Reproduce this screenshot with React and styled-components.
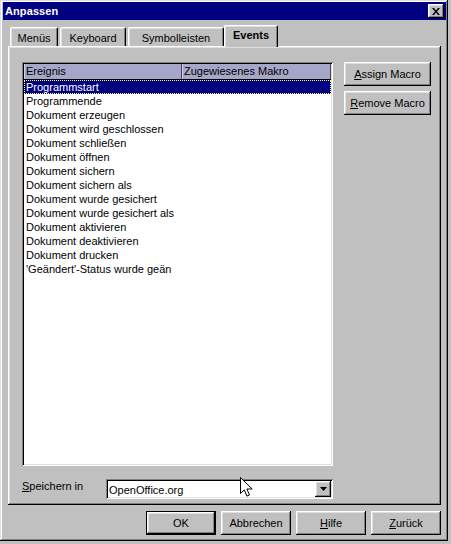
import React from "react";
import styled, { createGlobalStyle } from "styled-components";

const GlobalStyle = createGlobalStyle`
  html, body {
    margin: 0;
    padding: 0;
    background: #c0c0c0;
  }
  body {
    font-family: "Liberation Sans", Arial, sans-serif;
    font-size: 11px;
    color: #000;
  }
  * {
    box-sizing: border-box;
  }
`;

const events = [
  "Programmstart",
  "Programmende",
  "Dokument erzeugen",
  "Dokument wird geschlossen",
  "Dokument schließen",
  "Dokument öffnen",
  "Dokument sichern",
  "Dokument sichern als",
  "Dokument wurde gesichert",
  "Dokument wurde gesichert als",
  "Dokument aktivieren",
  "Dokument deaktivieren",
  "Dokument drucken",
  "'Geändert'-Status wurde geän",
];

const tabs = [
  { label: "Menüs", width: 48 },
  { label: "Keyboard", width: 66 },
  { label: "Symbolleisten", width: 96 },
  { label: "Events", width: 54, active: true },
];

export default function App() {
  return (
    <>
      <GlobalStyle />
      <Window>
        <TitleBar>
          <Title>Anpassen</Title>
          <CloseButton>
            <svg width="8" height="7" viewBox="0 0 8 7">
              <path d="M0 0h2l2 2.5L6 0h2L5 3.5 8 7H6L4 4.5 2 7H0l3-3.5z" fill="#000" />
            </svg>
          </CloseButton>
        </TitleBar>
        <Body>
          <TabRow>
            {tabs.map((t) => (
              <Tab key={t.label} $width={t.width} $active={t.active}>
                {t.label}
              </Tab>
            ))}
          </TabRow>
          <Panel>
            <TopArea>
              <List>
                <ListHeader>
                  <HeaderCell $width={158}>Ereignis</HeaderCell>
                  <HeaderCell $grow>Zugewiesenes Makro</HeaderCell>
                </ListHeader>
                <Rows>
                  {events.map((e, i) => (
                    <Row key={e} $selected={i === 0}>
                      {e}
                    </Row>
                  ))}
                </Rows>
              </List>
              <SideButtons>
                <Button $width={87}>
                  <u>A</u>ssign Macro
                </Button>
                <Button $width={87}>
                  <u>R</u>emove Macro
                </Button>
              </SideButtons>
            </TopArea>
            <SaveRow>
              <SaveLabel>
                <u>S</u>peichern in
              </SaveLabel>
              <Combo>
                <ComboText>OpenOffice.org</ComboText>
                <ComboArrow>
                  <svg width="7" height="4" viewBox="0 0 7 4">
                    <path d="M0 0h7L3.5 4z" fill="#000" />
                  </svg>
                </ComboArrow>
              </Combo>
            </SaveRow>
          </Panel>
          <Footer>
            <Button $width={70} $default>
              OK
            </Button>
            <Button $width={70}>Abbrechen</Button>
            <Button $width={70}>
              <u>H</u>ilfe
            </Button>
            <Button $width={70}>
              <u>Z</u>urück
            </Button>
          </Footer>
        </Body>
        <Cursor width="13" height="21" viewBox="0 0 13 21">
          <path
            d="M0.5 0.5v16l3.8-3.6 2.6 6.2 2.6-1.1-2.6-6h5.3z"
            fill="#fff"
            stroke="#000"
            strokeWidth="1"
          />
        </Cursor>
      </Window>
    </>
  );
}

const raised = `
  box-shadow: inset -1px -1px #000, inset 1px 1px #fff,
    inset -2px -2px #808080, inset 2px 2px #dfdfdf;
`;

const sunken = `
  box-shadow: inset 1px 1px #808080, inset -1px -1px #fff,
    inset 2px 2px #000, inset -2px -2px #dfdfdf;
`;

const Window = styled.div`
  position: relative;
  width: 448px;
  height: 541px;
  background: #c0c0c0;
  padding: 2px 2px 2px 3px;
  box-shadow: inset -1px -1px #000, inset 1px 1px #dfdfdf,
    inset -2px -2px #808080, inset 2px 2px #fff;
`;

const TitleBar = styled.div`
  height: 18px;
  background: #000080;
  display: flex;
  align-items: center;
  justify-content: space-between;
  padding: 0 2px;
`;

const Title = styled.span`
  color: #fff;
  font-weight: bold;
  font-size: 11px;
  letter-spacing: 0.1px;
`;

const CloseButton = styled.div`
  width: 16px;
  height: 14px;
  background: #c0c0c0;
  display: flex;
  align-items: center;
  justify-content: center;
  ${raised}
`;

const Body = styled.div`
  display: flex;
  flex-direction: column;
  padding: 5px 5px 0 5px;
`;

const TabRow = styled.div`
  display: flex;
  align-items: flex-end;
  gap: 2px;
  height: 21px;
  padding-left: 2px;
  position: relative;
  z-index: 1;
`;

const Tab = styled.div`
  width: ${(p) => p.$width}px;
  height: ${(p) => (p.$active ? 22 : 19)}px;
  margin-left: ${(p) => (p.$active ? -2 : 0)}px;
  margin-bottom: ${(p) => (p.$active ? -1 : 0)}px;
  padding-top: ${(p) => (p.$active ? 3 : 4)}px;
  display: flex;
  justify-content: center;
  font-weight: ${(p) => (p.$active ? "bold" : "normal")};
  background: #c0c0c0;
  border-top: 1px solid #fff;
  border-left: 1px solid #fff;
  border-right: 1px solid #000;
  border-radius: 2px 2px 0 0;
  box-shadow: inset -1px 0 #808080, inset 1px 1px #dfdfdf;
`;

const Panel = styled.div`
  height: 459px;
  padding: 16px 0 0 14px;
  display: flex;
  flex-direction: column;
  ${raised}
`;

const TopArea = styled.div`
  display: flex;
  gap: 11px;
`;

const List = styled.div`
  width: 311px;
  height: 404px;
  background: #fff;
  padding: 2px;
  display: flex;
  flex-direction: column;
  ${sunken}
`;

const ListHeader = styled.div`
  display: flex;
  height: 16px;
  background: #a6a6c8;
  border-bottom: 1px solid #000;
`;

const HeaderCell = styled.div`
  width: ${(p) => (p.$width ? `${p.$width}px` : "auto")};
  flex: ${(p) => (p.$grow ? 1 : "none")};
  padding: 1px 0 0 2px;
  border-right: 1px solid #404060;
  box-shadow: inset 1px 0 #d0d0e4;
  white-space: nowrap;
  overflow: hidden;
`;

const Rows = styled.div`
  display: flex;
  flex-direction: column;
`;

const Row = styled.div`
  height: 14px;
  line-height: 15px;
  padding-left: 2px;
  white-space: nowrap;
  overflow: hidden;
  ${(p) =>
    p.$selected &&
    `
    background: #000080;
    color: #fff;
    outline: 1px dotted #ffff80;
    outline-offset: -1px;
  `}
`;

const SideButtons = styled.div`
  display: flex;
  flex-direction: column;
  gap: 5px;
`;

const Button = styled.div`
  width: ${(p) => p.$width}px;
  height: 24px;
  display: flex;
  align-items: center;
  justify-content: center;
  background: #c0c0c0;
  white-space: nowrap;
  ${raised}
  ${(p) =>
    p.$default &&
    `
    box-shadow: inset 0 0 0 1px #000, inset -2px -2px #000, inset 2px 2px #fff,
      inset -3px -3px #808080, inset 3px 3px #dfdfdf;
  `}
`;

const SaveRow = styled.div`
  display: flex;
  align-items: center;
  margin-top: 13px;
  height: 20px;
`;

const SaveLabel = styled.div`
  width: 84px;
  margin-top: -6px;
`;

const Combo = styled.div`
  width: 227px;
  height: 20px;
  background: #fff;
  padding: 2px;
  display: flex;
  align-items: center;
  justify-content: space-between;
  ${sunken}
`;

const ComboText = styled.span`
  padding-left: 1px;
  padding-top: 1px;
`;

const ComboArrow = styled.div`
  width: 16px;
  height: 16px;
  background: #c0c0c0;
  display: flex;
  align-items: center;
  justify-content: center;
  ${raised}
`;

const Footer = styled.div`
  display: flex;
  justify-content: flex-end;
  gap: 5px;
  margin-top: 6px;
`;

const Cursor = styled.svg`
  position: absolute;
  left: 240px;
  top: 477px;
`;
